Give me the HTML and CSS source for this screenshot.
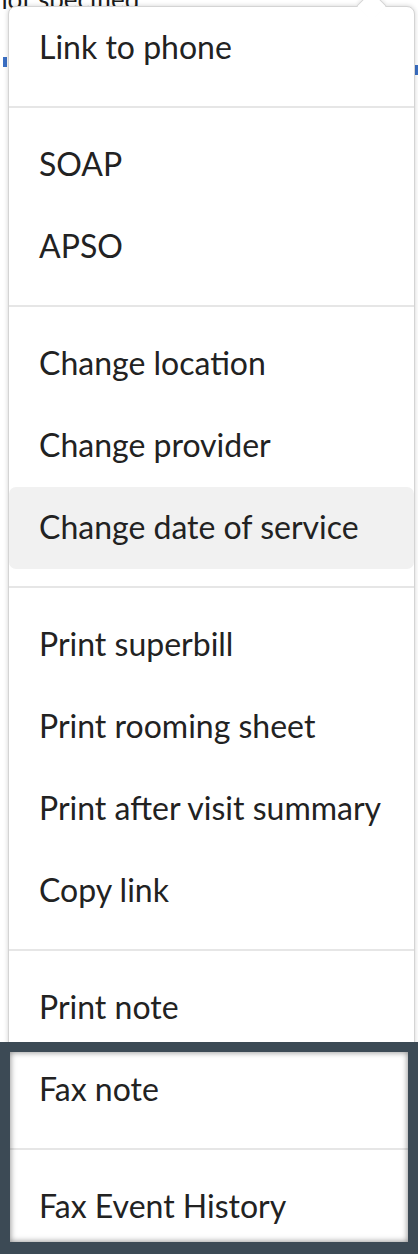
FILE: index.html
```html
<!DOCTYPE html>
<html>
<head>
<meta charset="utf-8">
<link rel="stylesheet" href="styles.css">
</head>
<body>
<div class="page">
  <div class="status">not specified</div>
  <div class="tabs">
    <span class="tab tab-left"></span>
    <span class="tab tab-right"></span>
  </div>
</div>
<div class="menu">
  <div class="group first">
    <div class="item">Link to phone</div>
  </div>
  <div class="sep"></div>
  <div class="group">
    <div class="item">SOAP</div>
    <div class="item">APSO</div>
  </div>
  <div class="sep"></div>
  <div class="group">
    <div class="item">Change location</div>
    <div class="item">Change provider</div>
    <div class="item active">Change date of service</div>
  </div>
  <div class="sep"></div>
  <div class="group">
    <div class="item">Print superbill</div>
    <div class="item">Print rooming sheet</div>
    <div class="item">Print after visit summary</div>
    <div class="item">Copy link</div>
  </div>
  <div class="sep"></div>
  <div class="group">
    <div class="item">Print note</div>
    <div class="item">Fax note</div>
  </div>
  <div class="sep"></div>
  <div class="group">
    <div class="item">Fax Event History</div>
  </div>
</div>
<div class="callout"></div>
</body>
</html>
```
FILE: styles.css
```css
html, body {
  margin: 0;
  padding: 0;
  background: #ffffff;
}
body {
  position: relative;
  width: 418px;
  height: 1254px;
  overflow: hidden;
  font-family: Lato, "Noto Sans", sans-serif;
  color: #222222;
}
.page {
  display: flex;
  flex-direction: column;
}
.status {
  font-size: 26px;
  line-height: 26px;
  margin-top: -14px;
  margin-left: -7px;
  color: #1c1c1c;
}
.tabs {
  display: flex;
  justify-content: space-between;
  margin-top: 45px;
  padding-left: 3px;
}
.tab {
  display: block;
  width: 4px;
  height: 10px;
  background: #3a6fc4;
}
.tab-right {
  margin-top: 8px;
}
.menu {
  position: absolute;
  left: 8px;
  top: 6px;
  width: 407px;
  box-sizing: border-box;
  background: #ffffff;
  border: 1px solid #d4d4d4;
  border-radius: 8px;
  box-shadow: 0 0 5px rgba(0, 0, 0, 0.18);
}
.menu::before {
  content: "";
  position: absolute;
  left: 352px;
  top: -12px;
  width: 20px;
  height: 20px;
  background: #ffffff;
  border-left: 1px solid #d4d4d4;
  border-top: 1px solid #d4d4d4;
  transform: rotate(45deg);
  box-shadow: -2px -2px 3px rgba(0, 0, 0, 0.06);
}
.group {
  padding: 16.5px 0;
}
.group.first {
  padding-top: 0;
}
.sep {
  height: 2px;
  background: #e6e6e6;
}
.item {
  position: relative;
  height: 82px;
  box-sizing: border-box;
  display: flex;
  align-items: center;
  padding: 0 0 3px 30px;
  font-size: 32px;
  color: #222222;
  border-radius: 7px;
}
.item.active {
  background: #f1f1f1;
}
.callout {
  position: absolute;
  left: 0;
  top: 1042px;
  width: 418px;
  height: 212px;
  box-sizing: border-box;
  border-style: solid;
  border-color: #3c4a55;
  border-width: 10px 10px 12px 10px;
  box-shadow: inset 0 0 6px rgba(0, 0, 0, 0.5);
}
```
